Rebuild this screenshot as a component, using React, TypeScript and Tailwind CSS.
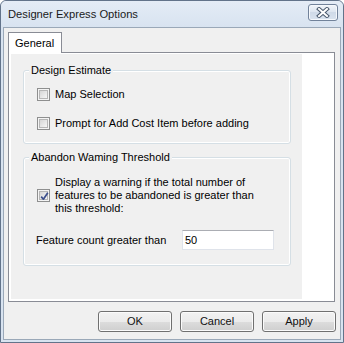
import React from "react";

function CheckBox({ checked }: { checked?: boolean }) {
  return (
    <div className="w-[13px] h-[13px] shrink-0 border border-[#8e8f8f] bg-[#f4f4f4] p-[1px]">
      <div className="w-full h-full border border-[#b6b6b6] bg-[linear-gradient(135deg,#d6d6d6,#f6f6f6)] relative">
        {checked && (
          <svg className="absolute -left-[1px] -top-[1px]" width="11" height="11" viewBox="0 0 11 11">
            <path d="M2.2 5.6 L4.4 8.2 L8.8 1.8" fill="none" stroke="#3c4f8c" strokeWidth="1.7" strokeLinejoin="round" />
          </svg>
        )}
      </div>
    </div>
  );
}

function Group({ title, className, children }: { title: string; className: string; children: React.ReactNode }) {
  return (
    <div className={"relative ml-[12px] w-[268px] border border-[#d5dfe5] rounded-[3px] shadow-[inset_0_0_0_1px_#ffffff] " + className}>
      <div className="absolute left-[5px] -top-[7px] px-[2px] bg-[#f0f0f0] leading-[13px] text-[#000]">{title}</div>
      {children}
    </div>
  );
}

function Button({ label }: { label: string }) {
  return (
    <div className="w-[74px] h-[21px] rounded-[3px] border border-[#707070] shadow-[inset_0_0_0_1px_#fbfbfb] bg-[linear-gradient(#f2f2f2,#ebebeb_50%,#dddddd_50%,#cfcfcf)] flex items-center justify-center text-[#111] leading-[13px]">
      {label}
    </div>
  );
}

export default function App() {
  return (
    <div className="w-[344px] h-[343px] bg-[#d8e3f0] border border-[#62738a] rounded-t-[6px] flex flex-col font-['Liberation_Sans',Arial,sans-serif] text-[11px] text-black overflow-hidden">
      <div className="h-[26px] shrink-0 flex items-start justify-between bg-[linear-gradient(#e4ecf6,#d8e3f0)] rounded-t-[5px]">
        <span className="ml-[7px] mt-[6px] text-[11.2px] leading-[14px] text-[#1a1a1a]">Designer Express Options</span>
        <div className="mt-[3px] mr-[5px] w-[30px] h-[17px] rounded-[3px] border border-[#71829a] bg-[linear-gradient(#f1f5fa,#dbe4ef_50%,#cfdae8_50%,#d9e3ef)] shadow-[inset_0_0_0_1px_#f5f8fc] flex items-center justify-center">
          <svg width="14" height="11" viewBox="0 0 14 11">
            <path d="M3 2 L11 9 M11 2 L3 9" stroke="#4a5a6e" strokeWidth="4" strokeLinecap="square" />
            <path d="M3 2 L11 9 M11 2 L3 9" stroke="#ffffff" strokeWidth="2" strokeLinecap="square" />
          </svg>
        </div>
      </div>
      <div className="flex-1 mx-[2px] mb-[2px] border border-[#9aa8b8] bg-[#f0f0f0] flex flex-col pl-[4px] pr-[5px] pt-[4px]">
        <div className="flex">
          <div className="relative z-10 -mb-px h-[21px] w-[54px] border border-b-0 border-[#898c95] bg-white flex items-center pl-[6px] leading-[13px]">
            General
          </div>
        </div>
        <div className="h-[250px] border border-[#898c95] bg-white pt-[1px] pl-[2px]">
          <div className="w-[291px] h-[245px] bg-[#f0f0f0] flex flex-col pt-[16px]">
            <Group title="Design Estimate" className="h-[74px]">
              <div className="flex flex-col gap-[16px] pt-[17px] pl-[13px]">
                <div className="flex items-center gap-[5px] leading-[13px]">
                  <CheckBox />
                  <span>Map Selection</span>
                </div>
                <div className="flex items-center gap-[5px] leading-[13px]">
                  <CheckBox />
                  <span>Prompt for Add Cost Item before adding</span>
                </div>
              </div>
            </Group>
            <Group title="Abandon Waming Threshold" className="h-[109px] mt-[13px]">
              <div className="flex flex-col pt-[18px] pl-[12px]">
                <div className="flex items-center gap-[5px] ml-[1px]">
                  <CheckBox checked />
                  <span className="leading-[13px]">
                    Display a warning if the total number of
                    <br />
                    features to be abandoned is greater than
                    <br />
                    this threshold:
                  </span>
                </div>
                <div className="flex items-center mt-[15px]">
                  <span className="w-[146px] leading-[13px]">Feature count greater than</span>
                  <div className="w-[92px] h-[20px] border border-[#dfe3ea] border-t-[#abadb3] bg-white flex items-center pl-[2px] leading-[13px]">
                    50
                  </div>
                </div>
              </div>
            </Group>
          </div>
        </div>
        <div className="mt-[9px] flex justify-end gap-[8px] -mr-[1px]">
          <Button label="OK" />
          <Button label="Cancel" />
          <Button label="Apply" />
        </div>
      </div>
    </div>
  );
}
